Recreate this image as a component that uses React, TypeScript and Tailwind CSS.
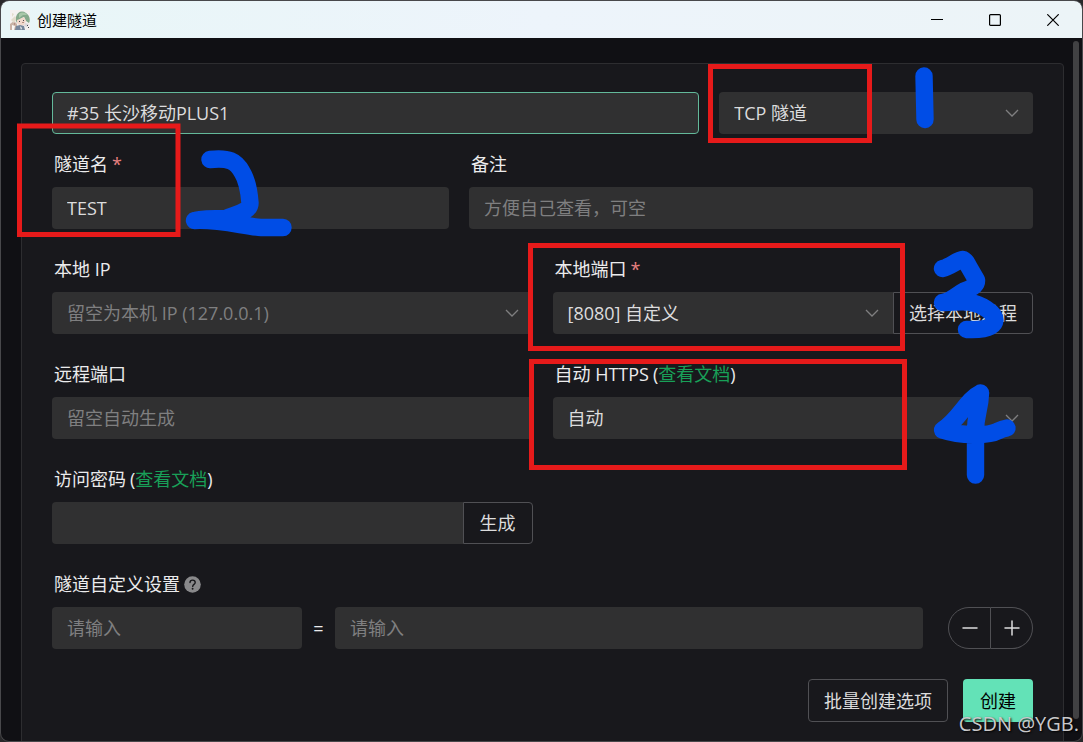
import type { ReactNode } from 'react';
import { clsx } from 'clsx';

const FIELD =
  'h-[42px] w-full min-w-0 appearance-none rounded-[4px] bg-[#303031] px-[15px] text-[#dcdcdd] outline-none placeholder:text-[#7f7f80]';

const OUTLINE_BUTTON =
  'shrink-0 border border-[#505054] text-[#dcdcdd] whitespace-nowrap';

const App = () => {
  return (
    <div className="relative h-screen overflow-hidden bg-[#28282a] font-['Open_Sans','Noto_Sans_CJK_SC',sans-serif]">
      <div className="flex h-full flex-col overflow-hidden rounded-[9px] border border-[#48484b] bg-[#101014]">
        <TitleBar />
        <main className="relative min-h-0 flex-1 overflow-hidden pt-[25px] pr-[18px] pl-5">
          <TunnelForm />
          <div className="absolute top-[3px] right-[3px] bottom-[22px] w-[6px] rounded-full bg-[#414143]" />
        </main>
      </div>
      <Annotations />
      <Watermark />
    </div>
  );
};

const TitleBar = () => {
  return (
    <header className="flex h-[37px] shrink-0 items-center bg-linear-to-r from-[#e8f6f7] via-[#edf4fb] to-[#ecf4f7] pl-[9px] text-black">
      <Avatar />
      <h1 className="ml-[7px] flex-1 text-[15px] leading-5">创建隧道</h1>
      <button type="button" aria-label="最小化" className="grid h-full w-[58px] place-items-center">
        <svg width="12" height="12" viewBox="0 0 12 12">
          <path d="M0 5.5h12" stroke="currentColor" />
        </svg>
      </button>
      <button type="button" aria-label="最大化" className="grid h-full w-[58px] place-items-center">
        <svg width="12" height="12" viewBox="0 0 12 12" fill="none">
          <rect x=".6" y=".6" width="10.8" height="10.8" rx="1" stroke="currentColor" strokeWidth="1.2" />
        </svg>
      </button>
      <button type="button" aria-label="关闭" className="grid h-full w-[58px] place-items-center">
        <svg width="12" height="12" viewBox="0 0 12 12">
          <path d="M.3.3l11.4 11.4M11.7.3L.3 11.7" stroke="currentColor" strokeWidth="1.2" />
        </svg>
      </button>
    </header>
  );
};

const Avatar = () => {
  return (
    <svg width="20" height="20" viewBox="0 0 20 20" className="shrink-0">
      <rect width="20" height="20" fill="#f4f1f0" />
      <path d="M0 14l4-3 3 3v6H0z" fill="#c9b3a6" />
      <path d="M1 10l4-4 2 3-3 4zM2 3l2 1-2 3z" fill="#e2dccb" />
      <path d="M6 7c1-5 6-7 10-4 3 2 5 6 3 10l-3-2-2-4-4 2-3 4-1-2z" fill="#86a98b" />
      <path d="M9 4c3-2 6-2 8 1l-4 0-4 3z" fill="#a9c7a8" />
      <path d="M7 10l3-1 4-2 2 4-2 4-4 1-3-3z" fill="#f2d9cc" />
      <path d="M6 16l4-1 4 1 1 4H5z" fill="#77879b" />
      <path d="M2 15l3 1-1 4H2zM10 16l2 2-1 2z" fill="#faf8f6" />
      <path d="M15 13l4 1-2 3-3-1z" fill="#ddd8dc" />
      <path d="M9 11h1v1H9zM13 10h1v1h-1zM17 15h1v1h-1zM18 17h1v1h-1z" fill="#4b4a52" />
      <path d="M12 12h2v1h-2zM4 13h1v2H4z" fill="#b58f84" />
    </svg>
  );
};

const TunnelForm = () => {
  return (
    <form className="h-[760px] rounded-[4px] border border-[#2d2d30] bg-[#18181c] px-[30px] pt-7 text-[18px] leading-5 text-[#ebebec]">
      <div className="grid grid-cols-12 gap-x-5">
        <div className="col-span-8">
          <input
            aria-label="节点"
            defaultValue="#35 长沙移动PLUS1"
            className={clsx(FIELD, 'border border-[#63b99a] pr-[14px] pb-[2px] pl-[14px]')}
          />
        </div>
        <div className="col-span-4 mb-5">
          <Select id="type" label="隧道类型" options={['TCP 隧道']} />
        </div>

        <Field id="name" label="隧道名" required className="col-span-5">
          <input id="name" defaultValue="TEST" className={FIELD} />
        </Field>
        <Field id="note" label="备注" className="col-span-7">
          <input id="note" placeholder="方便自己查看，可空" className={FIELD} />
        </Field>

        <Field id="local-ip" label="本地 IP" className="col-span-6">
          <Select id="local-ip" options={['留空为本机 IP (127.0.0.1)']} placeholder />
        </Field>
        <Field id="local-port" label="本地端口" required className="col-span-6">
          <div className="flex">
            <Select id="local-port" options={['[8080] 自定义']} joined />
            <button type="button" className={clsx(OUTLINE_BUTTON, 'h-[42px] w-[140px] rounded-r-[4px]')}>
              选择本地进程
            </button>
          </div>
        </Field>

        <Field id="remote-port" label="远程端口" className="col-span-6">
          <input id="remote-port" placeholder="留空自动生成" className={FIELD} />
        </Field>
        <Field id="https" label="自动 HTTPS" docs className="col-span-6">
          <Select id="https" options={['自动']} />
        </Field>

        <Field id="password" label="访问密码" docs className="col-span-6">
          <div className="flex">
            <input id="password" className={clsx(FIELD, 'flex-1 rounded-r-none')} />
            <button type="button" className={clsx(OUTLINE_BUTTON, 'h-[42px] w-[70px] rounded-r-[4px]')}>
              生成
            </button>
          </div>
        </Field>

        <Field id="custom-key" label="隧道自定义设置" help className="col-span-12">
          <div className="flex items-center">
            <input id="custom-key" placeholder="请输入" className={clsx(FIELD, 'max-w-[250px]')} />
            <span className="w-[33px] shrink-0 text-center">=</span>
            <input aria-label="设置值" placeholder="请输入" className={clsx(FIELD, 'flex-1')} />
            <div className="ml-[25px] flex">
              <button
                type="button"
                aria-label="删除"
                className={clsx(OUTLINE_BUTTON, 'grid h-[42px] w-[43px] place-items-center rounded-l-full')}
              >
                <svg width="16" height="16" viewBox="0 0 16 16">
                  <path d="M1 8h14" stroke="currentColor" strokeWidth="1.5" strokeLinecap="round" />
                </svg>
              </button>
              <button
                type="button"
                aria-label="添加"
                className={clsx(OUTLINE_BUTTON, 'grid h-[42px] w-[42px] place-items-center rounded-r-full border-l-0')}
              >
                <svg width="16" height="16" viewBox="0 0 16 16">
                  <path d="M1 8h14M8 1v14" stroke="currentColor" strokeWidth="1.5" strokeLinecap="round" />
                </svg>
              </button>
            </div>
          </div>
        </Field>
      </div>

      <div className="flex justify-end gap-[15px]">
        <button type="button" className={clsx(OUTLINE_BUTTON, 'h-[43px] w-[140px] rounded-[4px]')}>
          批量创建选项
        </button>
        <button type="submit" className="h-[43px] w-[70px] rounded-[4px] bg-[#63e2b7] text-black">
          创建
        </button>
      </div>
    </form>
  );
};

interface FieldProps {
  id: string;
  label: string;
  className: string;
  required?: boolean;
  docs?: boolean;
  help?: boolean;
  children: ReactNode;
}

const Field = ({ id, label, className, required, docs, help, children }: FieldProps) => {
  return (
    <div className={clsx('mb-[30px]', className)}>
      <div className="flex h-[33px] items-start pl-[2px]">
        <label htmlFor={id}>{label}</label>
        {required && <span className="ml-1 text-[#e88080]">*</span>}
        {docs && (
          <span className="ml-1">
            (
            <a href="#docs" className="text-[#18a058]">
              查看文档
            </a>
            )
          </span>
        )}
        {help && <HelpIcon />}
      </div>
      {children}
    </div>
  );
};

interface SelectProps {
  id: string;
  options: string[];
  label?: string;
  placeholder?: boolean;
  joined?: boolean;
}

const Select = ({ id, options, label, placeholder, joined }: SelectProps) => {
  return (
    <div className="relative min-w-0 flex-1">
      <select
        id={id}
        aria-label={label}
        className={clsx(FIELD, placeholder && 'text-[#7f7f80]!', joined && 'rounded-r-none')}
      >
        {options.map((option) => (
          <option key={option}>{option}</option>
        ))}
      </select>
      <svg
        width="14"
        height="8"
        viewBox="0 0 14 8"
        fill="none"
        className="pointer-events-none absolute top-[17px] right-[14px] text-[#7f7f80]"
      >
        <path d="M1 1l6 6 6-6" stroke="currentColor" strokeWidth="1.3" />
      </svg>
    </div>
  );
};

const HelpIcon = () => {
  return (
    <svg width="17" height="17" viewBox="0 0 17 17" fill="none" className="mt-[2px] ml-1">
      <circle cx="8.5" cy="8.5" r="8.3" fill="#89898b" />
      <path
        d="M6 6.6c0-3.4 5.2-3.2 5.2-.2 0 1.9-2.5 2-2.5 4"
        stroke="#18181c"
        strokeWidth="1.4"
        strokeLinecap="round"
      />
      <circle cx="8.6" cy="12.8" r=".95" fill="#18181c" />
    </svg>
  );
};

// hand-drawn marks that sit over the window
const Annotations = () => {
  return (
    <svg
      width="1083"
      height="742"
      viewBox="0 0 1083 742"
      fill="none"
      className="pointer-events-none absolute top-0 left-0"
    >
      <g stroke="#e61a1a" strokeWidth="5">
        <rect x="710.5" y="66.5" width="159" height="74" />
        <rect x="19.5" y="126" width="158.500" height="108.500" />
        <rect x="530.5" y="245.5" width="372" height="103" />
        <rect x="531.5" y="361.5" width="373" height="106" />
      </g>
      <g stroke="#004de6" strokeWidth="17.4" strokeLinecap="round" strokeLinejoin="round">
        <path d="M924 76l1 43.5" />
        <path d="M210 159.500C229 157.500 236 161 242 172C247 180 249 190 250 203C250 212 236 214 226 218.500C214 218.500 204 218.500 194.500 220.500C220 219 246 227 261 227.500H283" />
        <path d="M942.500 268.500C950 267 957 260 963 259.500C966 260 967 264 969 267L976.500 280C977 286 970 289 964 291C957 295 950 302 942.500 302.500C951 303 959 301 969 302C980 304 995 312 995 320C994 330 976 330 966.500 329.500" />
        <path d="M980.500 393C980 410 975.500 414 975.500 431V475M980.500 393C966 400 960 419 942.500 430C960 436 989 436 998 431C1002 429 1004 428.500 1007 428" />
      </g>
    </svg>
  );
};

const Watermark = () => {
  return (
    <span className="pointer-events-none absolute right-1 bottom-1 text-[20px] leading-7 text-[#c9c9cb] [text-shadow:1px_1px_2px_#000]">
      CSDN @YGB.
    </span>
  );
};

export default App;
